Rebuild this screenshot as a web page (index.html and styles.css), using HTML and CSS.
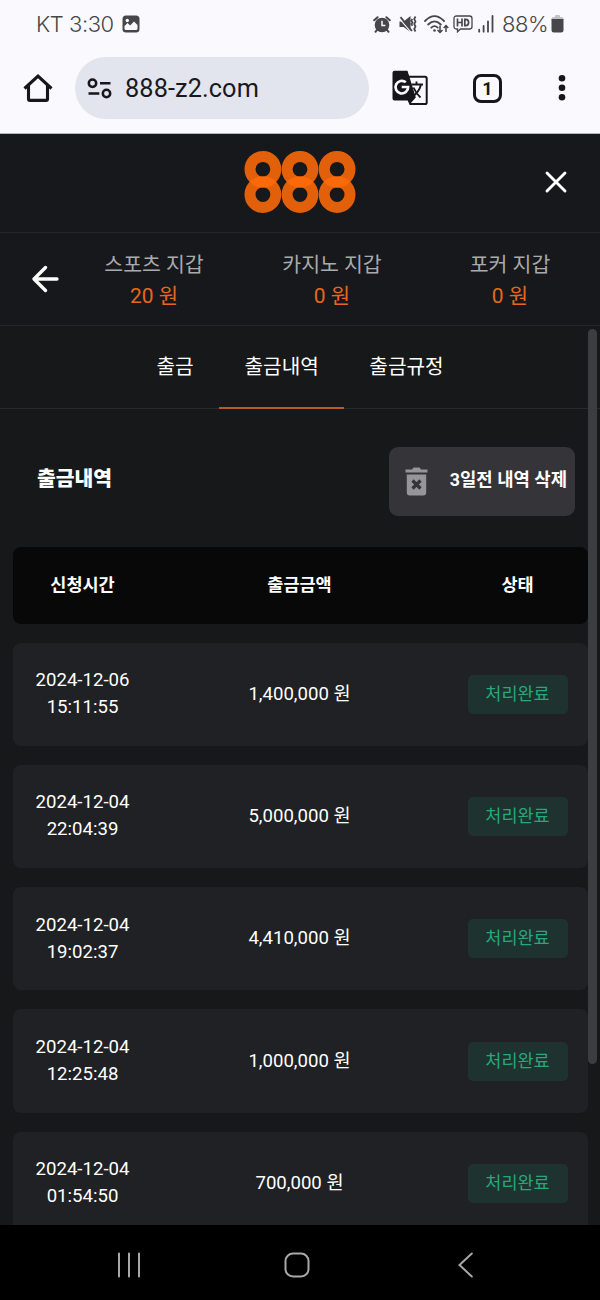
FILE: index.html
```html
<!DOCTYPE html>
<html lang="ko">
<head>
<meta charset="utf-8">
<meta name="viewport" content="width=device-width, initial-scale=1">
<title>출금내역</title>
<link rel="stylesheet" href="styles.css">
</head>
<body>
<div class="phone">
  <div class="chrome">
    <div class="status">
      <div class="status-left">
        <span class="clock">KT 3:30</span>
        <svg width="18" height="18" viewBox="0 0 18 18"><rect x=".5" y=".5" width="17" height="17" rx="3.5" fill="#47474a"/><circle cx="5.3" cy="5.5" r="1.7" fill="#faf9fe"/><path d="M2.500 13.500V11l3-3 2.700 2.500L12 6.500l3.500 3.500v3.500q0 1.500-1.500 1.500H4q-1.500 0-1.500-1.500z" fill="#faf9fe"/></svg>
      </div>
      <div class="status-right">
        <svg class="i-alarm" width="18" height="17" viewBox="0 0 18 17"><circle cx="9" cy="9" r="7.300" fill="#47474a"/><path d="M1.200 4.300 4.600 1.200M16.800 4.300 13.400 1.200M4.200 13.500l-1.700 2.300M13.800 13.500l1.700 2.300" stroke="#47474a" stroke-width="2" stroke-linecap="round"/><path d="M9 4.800V9.500h3.400" fill="none" stroke="#faf9fe" stroke-width="1.500"/></svg>
        <svg class="i-mute" width="18" height="18" viewBox="0 0 18 18"><path d="M.5 6.500h4.100L11.500 1v16L4.600 12H.5z" fill="#47474a"/><path d="M0 3.200l12 14" stroke="#faf9fe" stroke-width="1.200"/><path d="M1.500 2.200 13 16" stroke="#47474a" stroke-width="1.800"/><path d="M13.300 4l-1 1.700 1.200 1.700-1.200 1.700 1.200 1.700M16.500 1.500 15.200 4l1.300 2.500L15.200 9l1.300 2.500-1.300 2.500 1.300 2.500" fill="none" stroke="#47474a" stroke-width="1.700"/></svg>
        <svg class="i-wifi" width="25" height="19" viewBox="0 0 25 19"><g fill="none" stroke="#47474a" stroke-width="1.800" stroke-linecap="round"><path d="M1 6Q10.500-3.800 20 6M4.200 9.500q6.300-6.300 12.600 0M7.300 12.600q3.200-3 6.400 0"/></g><circle cx="10.500" cy="15.500" r="1.300" fill="#47474a"/><path d="M16 10.500v7M13.500 15l2.500 2.500 2.500-2.500M22 17v-6.500M19.700 12.900 22 10.500l2.300 2.400" fill="none" stroke="#47474a" stroke-width="1.500"/></svg>
        <svg class="i-hd" width="20" height="18" viewBox="0 0 20 18"><path d="M3.500 1h13q2.500 0 2.500 2.500v8q0 2.500-2.500 2.500H7.500L4.500 16.800V14h-1Q1 14 1 11.500v-8Q1 1 3.500 1z" fill="none" stroke="#47474a" stroke-width="1.300"/><path d="M4.500 3.500v8M9 3.500v8M4.500 7.500H9M11.800 4.300v6.400h.8q3 0 3-3.200t-3-3.200z" fill="none" stroke="#47474a" stroke-width="1.700"/></svg>
        <svg class="i-signal" width="16" height="18" viewBox="0 0 16 18"><path d="M1.200 14.700v2M5.600 11v5.700M10 6.500v10.200M14.500 1v15.700" stroke="#47474a" stroke-width="1.800" stroke-linecap="round"/></svg>
        <span class="battery">88%</span>
        <svg class="i-batt" width="13" height="18" viewBox="0 0 13 18"><path d="M4 2V1q0-1 1-1h3q1 0 1 1v1h1.500Q12.500 2 12.500 4v1H.5V4Q.5 2 2.500 2z" fill="#c2c2c6"/><path d="M.5 4h12v11q0 2.500-2.500 2.500H3Q.5 17.500.5 15z" fill="#47474a"/></svg>
      </div>
    </div>
    <div class="toolbar">
      <svg class="home" width="30" height="30" viewBox="0 0 30 30"><path d="M1.500 15.500 15 3l13.500 12.500M5.500 12.500v13.400q0 1.500 1.500 1.500h16q1.500 0 1.500-1.500V12.500" fill="none" stroke="#16161b" stroke-width="3.100" stroke-linejoin="miter"/></svg>
      <div class="address">
        <svg width="25" height="21" viewBox="0 0 25 21"><g fill="none" stroke="#16161b" stroke-width="2.500"><circle cx="5.500" cy="5.300" r="3.700"/><circle cx="19.500" cy="15.500" r="3.700"/><path d="M13 5.300h10.500M1.500 15.500h10.800"/></g></svg>
        <span>888-z2.com</span>
      </div>
      <svg class="translate" width="36" height="36" viewBox="0 0 36 36"><path d="M13 6.700h20q1.700 0 1.700 1.700v24q0 1.700-1.700 1.700H18.300l-2-5" fill="none" stroke="#16161b" stroke-width="2"/><path d="M2.500.700h13L23.800 27.500 18 34l-2-3.500H2.500Q.500 30.500.500 28.500V2.700q0-2 2-2z" fill="#16161b"/><path d="M19.500 14.500H31M24.500 11.500v3M29 14.500q-2 8-9 12.500M21.500 17.500q2.500 6 7 10" fill="none" stroke="#16161b" stroke-width="1.900"/><path d="M13.800 12.300a6.300 6.300 0 1 0 2.300 4.700H9.700" fill="none" stroke="#faf9fe" stroke-width="2.700"/></svg>
      <span class="tab-count">1</span>
      <svg class="dots" width="8" height="28" viewBox="0 0 8 28"><g fill="#16161b"><circle cx="4" cy="4.300" r="3.300"/><circle cx="4" cy="13.800" r="3.300"/><circle cx="4" cy="23.300" r="3.300"/></g></svg>
    </div>
  </div>

  <header class="brand">
    <svg width="112" height="64" viewBox="0 0 112 64" role="img" aria-label="888"><g fill="none" stroke="#ff6a08" stroke-width="11" stroke-opacity=".88"><circle cx="18.900" cy="19.300" r="12.900"/><circle cx="18.900" cy="44.600" r="12.900"/><circle cx="56" cy="19.300" r="12.900"/><circle cx="56" cy="44.600" r="12.900"/><circle cx="93.100" cy="19.300" r="12.900"/><circle cx="93.100" cy="44.600" r="12.900"/></g></svg>
    <svg class="close" width="24" height="24" viewBox="0 0 24 24"><path d="M3 3l18 18M21 3 3 21" stroke="#fff" stroke-width="2.900" stroke-linecap="round"/></svg>
  </header>

  <section class="wallets">
    <svg class="back" width="28" height="28" viewBox="0 0 28 28"><path d="M13.500 2.500 2 14l11.500 11.500M2.500 14H25" fill="none" stroke="#fff" stroke-width="3.300" stroke-linecap="round" stroke-linejoin="round"/></svg>
    <div class="wallet"><span>스포츠 지갑</span><b>20 원</b></div>
    <div class="wallet"><span>카지노 지갑</span><b>0 원</b></div>
    <div class="wallet"><span>포커 지갑</span><b>0 원</b></div>
  </section>

  <main class="content">
    <nav class="tabs"><a>출금</a><a class="active">출금내역</a><a>출금규정</a></nav>
    <div class="heading">
      <h1>출금내역</h1>
      <button class="delete"><svg width="23" height="29" viewBox="0 0 23 29"><path d="M.5 2.500h6.500L8.500.500h6L16 2.500h6.500v3H.5z" fill="#969698"/><path d="M1.800 7.500h19.400v18q0 3-3 3H4.800q-3 0-3-3z" fill="#969698"/><path d="m7.500 13.500 8 8m0-8-8 8" stroke="#353439" stroke-width="3.200"/></svg><span>3일전 내역 삭제</span></button>
    </div>
    <div class="row head"><span>신청시간</span><span>출금금액</span><span>상태</span></div>
    <div class="row"><time>2024-12-06<br>15:11:55</time><span>1,400,000 원</span><em>처리완료</em></div>
    <div class="row"><time>2024-12-04<br>22:04:39</time><span>5,000,000 원</span><em>처리완료</em></div>
    <div class="row"><time>2024-12-04<br>19:02:37</time><span>4,410,000 원</span><em>처리완료</em></div>
    <div class="row"><time>2024-12-04<br>12:25:48</time><span>1,000,000 원</span><em>처리완료</em></div>
    <div class="row"><time>2024-12-04<br>01:54:50</time><span>700,000 원</span><em>처리완료</em></div>
    <div class="scrollbar"></div>
  </main>

  <footer class="navbar">
    <svg width="24" height="26" viewBox="0 0 24 26"><path d="M2 1.500v23M12 1.500v23M22 1.500v23" stroke="#a8a8a8" stroke-width="2" stroke-linecap="round"/></svg>
    <svg class="nav-home" width="26" height="26" viewBox="0 0 26 26"><rect x="1.500" y="1.500" width="23" height="23" rx="7.500" fill="none" stroke="#a8a8a8" stroke-width="2"/></svg>
    <svg width="16" height="26" viewBox="0 0 16 26"><path d="M13.800 1.500 1.500 13l12.300 11.500" fill="none" stroke="#a8a8a8" stroke-width="2" stroke-linecap="round"/></svg>
  </footer>
</div>
</body>
</html>
```

FILE: styles.css
```css
* { box-sizing: border-box; }
body { margin: 0; background: #171819; font-family: Roboto, "Noto Sans CJK KR", sans-serif; }
svg { display: block; flex: none; }
.phone { width: 600px; height: 1300px; display: flex; flex-direction: column; overflow: hidden; color: #fff; }

.chrome { height: 134px; flex: none; background: #faf9fe; border-bottom: 1px solid #b5b5bb; color: #47474a; }
.status { height: 48px; display: flex; justify-content: space-between; align-items: center; padding: 0 36px; }
.status-left, .status-right { display: flex; align-items: center; white-space: nowrap; }
.clock { width: 86px; font: 300 22px/30px Inter, sans-serif; letter-spacing: -.45px; }
.i-mute { margin-left: 8px; }
.i-wifi { margin-left: 7px; }
.i-hd { margin-left: 4px; }
.i-signal { margin-left: 5px; }
.battery { width: 49px; margin-left: 8px; font: 300 22px/30px Inter, sans-serif; letter-spacing: -.5px; }
.toolbar { height: 80px; display: flex; align-items: center; padding: 0 33px 0 23px; }
.address { width: 294px; height: 62px; margin-left: 22px; padding-left: 12px; border-radius: 31px; background: #e2e5ee; display: flex; align-items: center; gap: 13px; font-size: 25.300px; letter-spacing: .1px; color: #18191f; }
.address span { margin-top: 1px; }
.translate { margin-left: 23px; }
.tab-count { width: 29px; height: 29px; margin-left: 45px; border: 3px solid #16161b; border-radius: 8px; color: #16161b; font: 700 18px/23px Roboto, sans-serif; text-align: center; }
.dots { margin-left: auto; margin-right: 1px; }

.brand { height: 99px; flex: none; display: flex; align-items: center; justify-content: center; background: #17181b; border-bottom: 1px solid #25262a; padding: 0 32px 3px; }
.brand::before { content: ""; width: 24px; margin-right: auto; }
.brand .close { margin-left: auto; }

.wallets { height: 93px; flex: none; display: flex; align-items: center; background: #17181b; border-bottom: 1px solid #25262a; padding: 0 1px 0 32px; }
.wallets .back { margin-right: 5px; }
.wallet { width: 178px; padding-top: 4px; display: flex; flex-direction: column; align-items: center; font-size: 20.500px; line-height: 31px; color: #a9aaad; }
.wallet b { font-weight: 400; font-size: 21px; color: #e4681d; }

.content { position: relative; flex: none; height: 899px; overflow: hidden; background: #171819; }
.tabs { height: 83px; display: flex; justify-content: center; border-bottom: 1px solid #292a2b; font-size: 20.200px; line-height: 83px; }
.tabs a { padding: 0 25.500px; height: 83px; }
.tabs a:last-child { padding-left: 25px; }
.tabs .active { border-bottom: 2px solid #b75c26; }
.heading { height: 138px; padding: 0 25px 0 37px; display: flex; align-items: center; justify-content: space-between; }
h1 { margin: 1px 0 0; font-size: 20.400px; line-height: 30px; font-weight: 900; }
.delete { width: 186px; height: 69px; margin-top: 6px; border: 0; border-radius: 9px; background: #353439; color: #fff; display: flex; align-items: center; justify-content: space-between; padding: 0 8px 0 16px; font: 700 17.800px/28px Roboto, "Noto Sans CJK KR", sans-serif; white-space: nowrap; }
.delete span { margin-bottom: 2px; }
.row { height: 103.300px; margin: 0 12px 19px 13px; border-radius: 8px; background: #202124; display: grid; grid-template-columns: 139px 1fr 141px; align-items: center; justify-items: center; text-align: center; font-size: 18.600px; line-height: 27px; }
.row.head { height: 77px; margin-bottom: 18.500px; background: #080808; font-size: 17.500px; font-weight: 700; }
.row em { width: 100px; height: 39px; border-radius: 5px; background: #1e322f; color: #27a77c; font-style: normal; font-size: 17.500px; line-height: 39px; }
.scrollbar { position: absolute; right: 3px; top: 3px; width: 9px; height: 735px; border-radius: 5px; background: #3c3d40; }

.navbar { height: 75px; flex: none; background: #000; display: flex; align-items: center; justify-content: space-between; padding: 4px 126px 0 117px; }
.nav-home { margin-right: 6px; }
```
